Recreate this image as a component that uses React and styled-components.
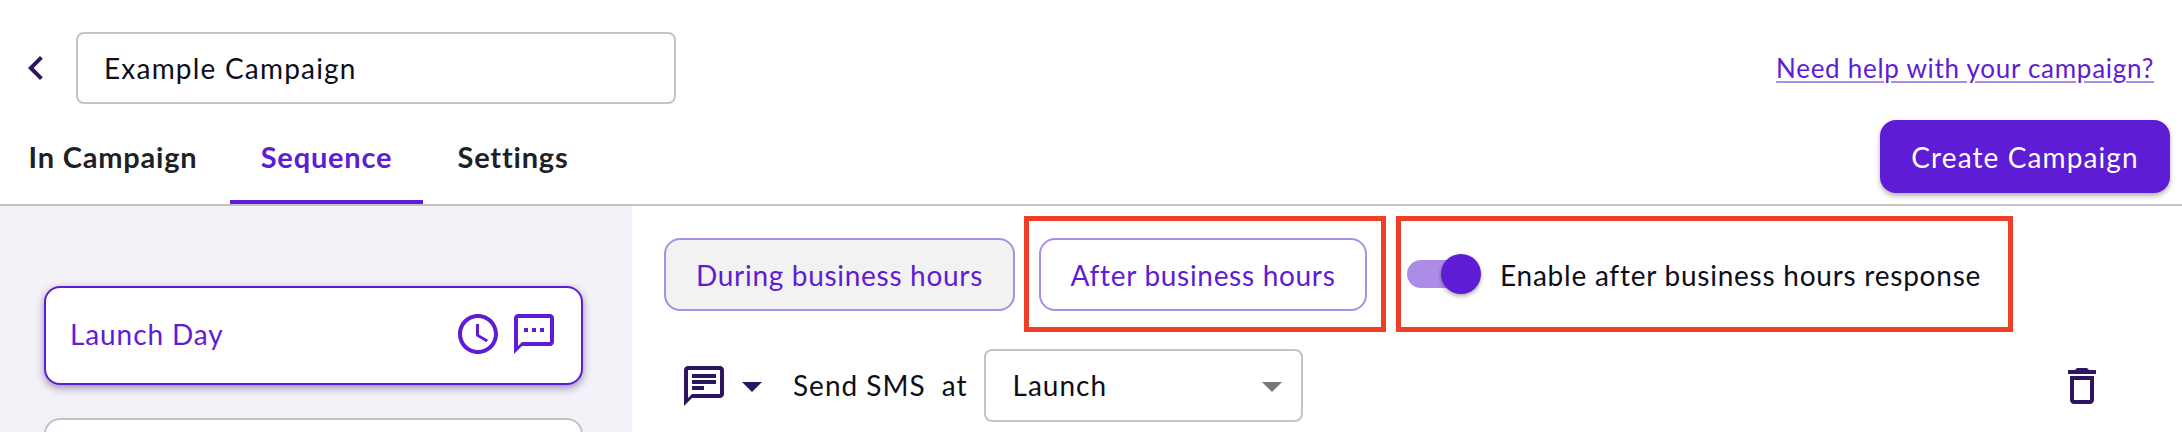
import React from "react";
import styled, { createGlobalStyle } from "styled-components";

const purple = "#5e1cd4";
const soft = "#ab8de8";
const ink = "#2e1560";
const line = "#c4c4c4";

const Global = createGlobalStyle`
  html, body { margin: 0; padding: 0; background: #fff; }
  body { font-family: "Lato", "Noto Sans", sans-serif; color: #0e0e1a; }
  * { box-sizing: border-box; }
`;

const Page = styled.div`
  width: 2182px;
  height: 432px;
  overflow: hidden;
  display: flex;
  flex-direction: column;
`;

const TopRow = styled.div`
  display: flex;
  align-items: center;
  height: 72px;
  margin-top: 32px;
  padding: 0 28px 0 12px;
  gap: 16px;
`;

const Icon = styled.svg`
  width: 48px;
  height: 48px;
  flex: none;
  display: block;
  fill: ${(p) => p.$color || ink};
`;

const NameInput = styled.div`
  width: 600px;
  height: 72px;
  border: 2px solid ${line};
  border-radius: 8px;
  padding: 0 26px;
  display: flex;
  align-items: center;
  font-size: 28px;
  letter-spacing: 1.2px;
`;

const HelpLink = styled.a`
  margin-left: auto;
  color: ${purple};
  font-size: 26px;
  letter-spacing: 0.72px;
  text-decoration: underline;
  text-decoration-color: ${soft};
  text-underline-offset: 3px;
`;

const TabRow = styled.div`
  display: flex;
  align-items: stretch;
  height: 102px;
  border-bottom: 2px solid ${line};
  padding-right: 12px;
`;

const Tab = styled.div`
  width: ${(p) => p.$w}px;
  margin-right: ${(p) => p.$gap || 0}px;
  height: 100px;
  display: flex;
  align-items: center;
  justify-content: center;
  padding-top: 8px;
  font-size: 29px;
  font-weight: 700;
  letter-spacing: 0.8px;
  color: ${(p) => (p.$active ? purple : "#1f1f26")};
  border-bottom: 4px solid ${(p) => (p.$active ? purple : "transparent")};
`;

const CreateButton = styled.button`
  margin: 16px 0 0 auto;
  width: 290px;
  height: 73px;
  border: 0;
  border-radius: 16px;
  background: ${purple};
  color: #fff;
  font: inherit;
  font-size: 28px;
  letter-spacing: 1.1px;
  box-shadow: 0 3px 5px rgba(0, 0, 0, 0.3);
`;

const Body = styled.div`
  flex: 1;
  min-height: 0;
  display: flex;
`;

const Side = styled.aside`
  width: 632px;
  flex: none;
  background: #f4f2f9;
  padding: 80px 49px 0 44px;
  display: flex;
  flex-direction: column;
  gap: 33px;
`;

const DayCard = styled.div`
  height: 99px;
  flex: none;
  background: #fff;
  border: 2px solid ${(p) => (p.$active ? purple : "#c4c0c8")};
  border-radius: 16px;
  padding: 0 23px 3px 24px;
  display: flex;
  align-items: center;
  gap: 8px;
  color: ${purple};
  font-size: 28px;
  letter-spacing: 0.9px;
  box-shadow: ${(p) => (p.$active ? "0 3px 9px rgba(40, 20, 90, 0.45)" : "none")};
`;

const DayName = styled.span`
  margin-right: auto;
`;

const Main = styled.main`
  flex: 1;
  padding: 10px 76px 0 32px;
`;

const FilterRow = styled.div`
  display: flex;
  align-items: center;
  height: 116px;
`;

const Pill = styled.button`
  width: ${(p) => p.$w}px;
  height: 73px;
  flex: none;
  padding: 2px 0 0;
  border: 2px solid ${soft};
  border-radius: 16px;
  background: ${(p) => (p.$filled ? "#f2f2f2" : "#fff")};
  color: ${purple};
  font: inherit;
  font-size: 28px;
  letter-spacing: 0.7px;
`;

const Annotated = styled.div`
  height: 116px;
  width: ${(p) => p.$w}px;
  margin-left: ${(p) => p.$gap}px;
  border: 5px solid #ee4026;
  display: flex;
  align-items: center;
  flex: none;
  padding-left: ${(p) => p.$pad}px;
`;

const Toggle = styled.div`
  position: relative;
  width: 53px;
  height: 28px;
  flex: none;
  border-radius: 14px;
  background: ${soft};
`;

const Knob = styled.div`
  position: absolute;
  left: 34px;
  top: -6px;
  width: 40px;
  height: 40px;
  border-radius: 50%;
  background: ${purple};
  box-shadow: 0 2px 4px rgba(0, 0, 0, 0.35);
`;

const ToggleLabel = styled.span`
  margin-left: 40px;
  padding-top: 2px;
  font-size: 28px;
  letter-spacing: 0.76px;
  white-space: nowrap;
`;

const StepRow = styled.div`
  display: flex;
  align-items: center;
  height: 73px;
  margin-top: 17px;
  padding-left: 16px;
`;

const StepLabel = styled.span`
  margin-left: ${(p) => p.$gap}px;
  padding-bottom: 2px;
  font-size: 28px;
  letter-spacing: 1px;
`;

const Select = styled.div`
  width: 319px;
  height: 73px;
  margin-left: 16px;
  border: 2px solid ${line};
  border-radius: 8px;
  padding: 0 5px 0 27px;
  display: flex;
  align-items: center;
  justify-content: space-between;
  font-size: 28px;
  letter-spacing: 1px;
`;

const SelectValue = styled.span`
  padding-bottom: 2px;
`;

const Spacer = styled.div`
  flex: 1;
`;

const Chevron = () => (
  <Icon viewBox="0 0 24 24"><path d="M15.41 7.41L14 6l-6 6 6 6 1.41-1.41L10.83 12z" /></Icon>
);
const Clock = () => (
  <Icon viewBox="0 0 24 24" $color={purple}><path d="M11.99 2C6.47 2 2 6.48 2 12s4.47 10 9.99 10C17.52 22 22 17.52 22 12S17.52 2 11.99 2zM12 20c-4.42 0-8-3.58-8-8s3.58-8 8-8 8 3.58 8 8-3.58 8-8 8zm.5-13H11v6l5.25 3.15.75-1.23-4.5-2.67z" /></Icon>
);
const Sms = () => (
  <Icon viewBox="0 0 24 24" $color={purple}><path d="M20 2H4c-1.1 0-2 .9-2 2v18l4-4h14c1.1 0 2-.9 2-2V4c0-1.1-.9-2-2-2zm0 14H6l-2 2V4h16v12zM7 9h2v2H7zm4 0h2v2h-2zm4 0h2v2h-2z" /></Icon>
);
const Chat = () => (
  <Icon viewBox="0 0 24 24"><path d="M20 2H4c-1.1 0-2 .9-2 2v18l4-4h14c1.1 0 2-.9 2-2V4c0-1.1-.9-2-2-2zm0 14H6l-2 2V4h16v12zM6 12h6v2H6zm0-3h12v2H6zm0-3h12v2H6z" /></Icon>
);
const Caret = ({ color }) => (
  <Icon viewBox="0 0 24 24" $color={color}><path d="M7 10l5 5 5-5z" /></Icon>
);
const Trash = () => (
  <Icon viewBox="0 0 24 24"><path d="M6 19c0 1.1.9 2 2 2h8c1.1 0 2-.9 2-2V7H6v12zM8 9h8v10H8V9zm7.5-5l-1-1h-5l-1 1H5v2h14V4z" /></Icon>
);

export default function App() {
  return (
    <Page>
      <Global />
      <TopRow>
        <Chevron />
        <NameInput>Example Campaign</NameInput>
        <HelpLink>Need help with your campaign?</HelpLink>
      </TopRow>
      <TabRow>
        <Tab $w={226} $gap={4}>In Campaign</Tab>
        <Tab $w={193} $gap={3} $active>Sequence</Tab>
        <Tab $w={174}>Settings</Tab>
        <CreateButton>Create Campaign</CreateButton>
      </TabRow>
      <Body>
        <Side>
          <DayCard $active>
            <DayName>Launch Day</DayName>
            <Clock />
            <Sms />
          </DayCard>
          <DayCard />
        </Side>
        <Main>
          <FilterRow>
            <Pill $w={351} $filled>During business hours</Pill>
            <Annotated $w={362} $gap={9} $pad={10}>
              <Pill $w={328}>After business hours</Pill>
            </Annotated>
            <Annotated $w={617} $gap={10} $pad={6}>
              <Toggle><Knob /></Toggle>
              <ToggleLabel>Enable after business hours response</ToggleLabel>
            </Annotated>
          </FilterRow>
          <StepRow>
            <Chat />
            <Caret />
            <StepLabel $gap={17}>Send SMS</StepLabel>
            <StepLabel $gap={16}>at</StepLabel>
            <Select>
              <SelectValue>Launch</SelectValue>
              <Caret color="#777777" />
            </Select>
            <Spacer />
            <Trash />
          </StepRow>
        </Main>
      </Body>
    </Page>
  );
}
